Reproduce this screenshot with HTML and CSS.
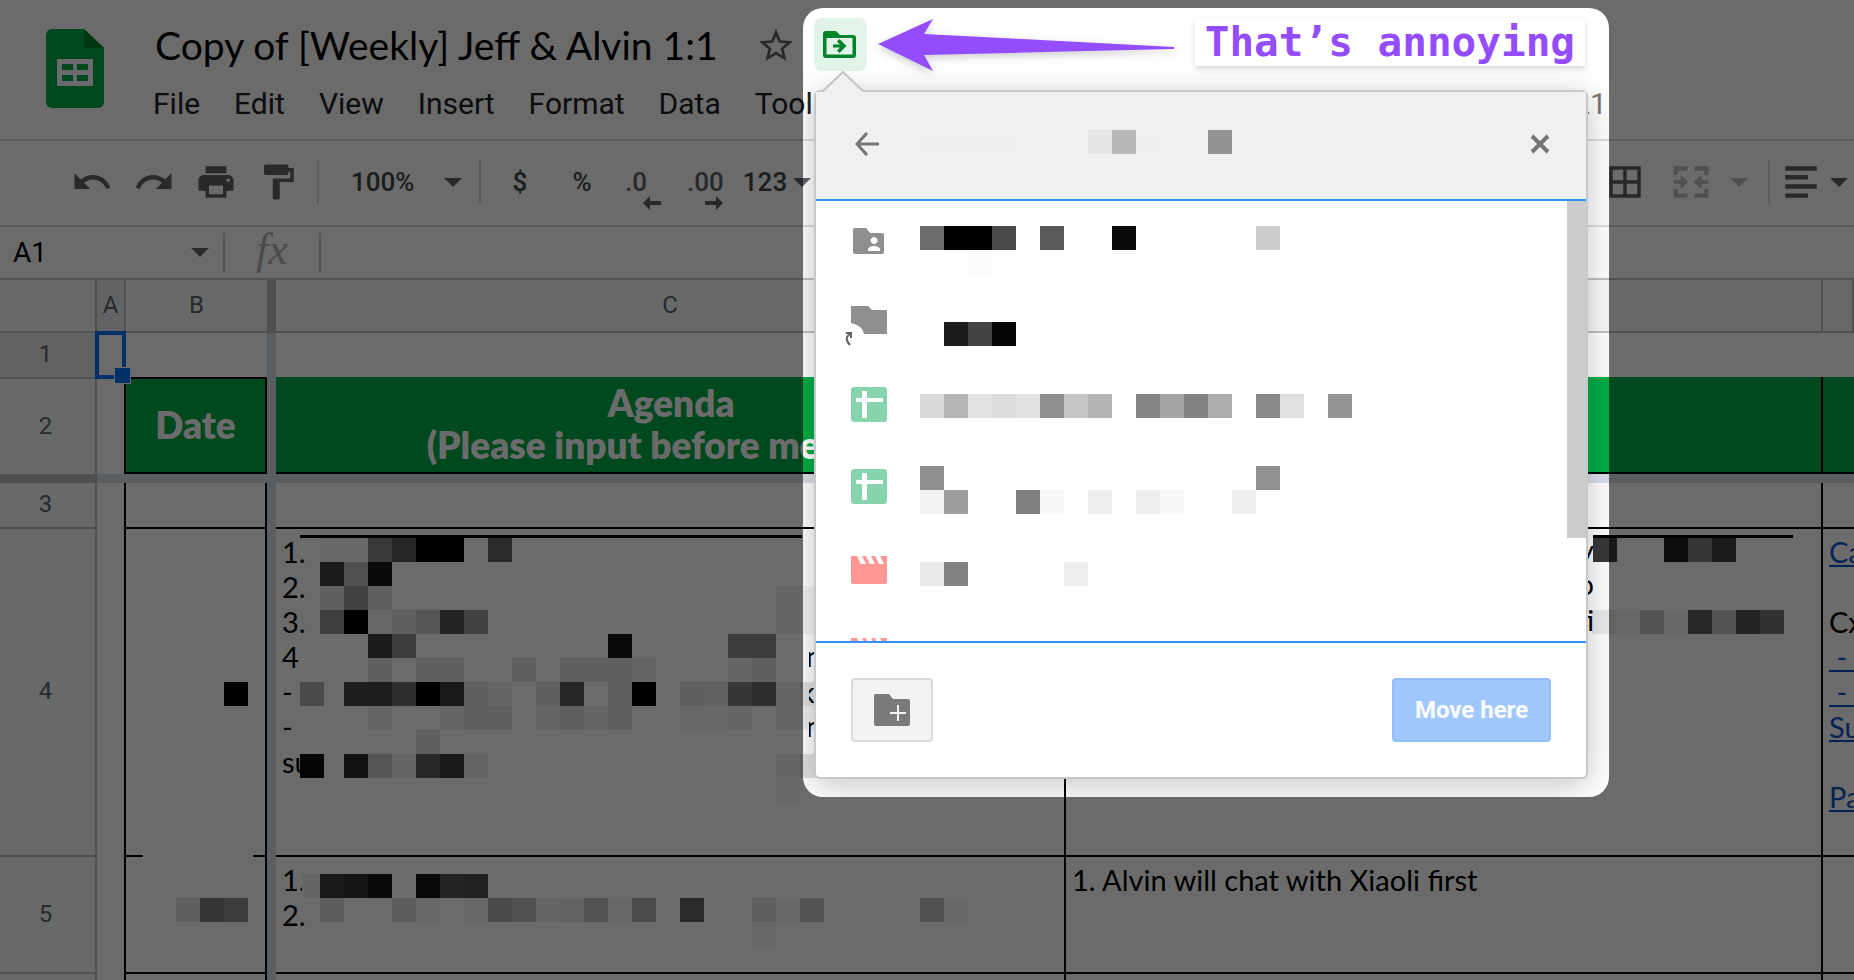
FILE: index.html
```html
<!DOCTYPE html>
<html lang="en">

<head>
    <meta charset="UTF-8">
    <meta name="viewport" content="width=device-width, initial-scale=1.0">
    <title>Copy of [Weekly] Jeff &amp; Alvin 1:1</title>
    <link rel="stylesheet" href="styles.css">
</head>

<body>
    <main class="app">
        <header class="header">
            <svg class="logo" viewBox="0 0 58 79">
                <path fill="#00ac47" d="M6 0h32l20 19v54a6 6 0 0 1-6 6H6a6 6 0 0 1-6-6V6a6 6 0 0 1 6-6z" />
                <path fill="#00832d" d="M38 0l20 19H38z" />
                <path fill="#fff" fill-rule="evenodd" d="M11 30h36v27H11zM16 35v6h11v-6zM31 35v6h11v-6zM16 46v6h11v-6zM31 46v6h11v-6z" />
            </svg>
            <div class="header__text">
                <div class="title">
                    <h1>Copy of [Weekly] Jeff &amp; Alvin 1:1</h1>
                    <button class="star" aria-label="Star">
                        <svg viewBox="2 2 20 19"><path fill="#5f6368" d="M22 9.24l-7.19-.62L12 2 9.19 8.63 2 9.24l5.46 4.73L5.82 21 12 17.27 18.18 21l-1.63-7.03L22 9.24zM12 15.4l-3.76 2.27 1-4.28-3.32-2.88 4.38-.38L12 6.1l1.71 4.04 4.38.38-3.32 2.88 1 4.28L12 15.4z" /></svg>
                    </button>
                </div>
                <nav class="menu">
                    <button>File</button>
                    <button>Edit</button>
                    <button>View</button>
                    <button>Insert</button>
                    <button>Format</button>
                    <button>Data</button>
                    <button>Tools</button>
                    <span class="edited">21</span>
                </nav>
            </div>
        </header>

        <section class="toolbar">
            <button class="tool" aria-label="Undo"><svg class="icon" viewBox="0 0 24 24"><path d="M12.5 8c-2.65 0-5.05.99-6.9 2.6L2 7v9h9l-3.62-3.62c1.39-1.16 3.16-1.88 5.12-1.88 3.54 0 6.55 2.31 7.6 5.5l2.37-.78C21.08 11.03 17.15 8 12.5 8z" /></svg></button>
            <button class="tool" aria-label="Redo"><svg class="icon" viewBox="0 0 24 24"><path d="M18.4 10.6C16.55 8.99 14.15 8 11.5 8c-4.65 0-8.58 3.03-9.96 7.22L3.9 16c1.05-3.19 4.05-5.5 7.6-5.5 1.95 0 3.73.72 5.12 1.88L13 16h9V7l-3.6 3.6z" /></svg></button>
            <button class="tool" aria-label="Print"><svg class="icon" viewBox="0 0 24 24"><path d="M19 8H5c-1.66 0-3 1.34-3 3v6h4v4h12v-4h4v-6c0-1.66-1.34-3-3-3zm-3 11H8v-5h8v5zm3-7c-.55 0-1-.45-1-1s.45-1 1-1 1 .45 1 1-.45 1-1 1zm-1-9H6v4h12V3z" /></svg></button>
            <button class="tool" aria-label="Paint format"><svg class="icon" viewBox="0 0 24 24"><path d="M18 4V3c0-.55-.45-1-1-1H5c-.55 0-1 .45-1 1v4c0 .55.45 1 1 1h12c.55 0 1-.45 1-1V6h1v4H9v11c0 .55.45 1 1 1h2c.55 0 1-.45 1-1v-9h8V4h-3z" /></svg></button>
            <span class="sep"></span>
            <label class="zoom">
                <select aria-label="Zoom">
                    <option>100%</option>
                </select>
                <svg class="caret" viewBox="0 0 18 9"><path d="M0 0h18L9 9z" /></svg>
            </label>
            <span class="sep"></span>
            <button class="tool">$</button>
            <button class="tool">%</button>
            <button class="tool tool--decimal">.0<svg class="shift" viewBox="0 0 18 14"><path d="M0 7l7-7v5h11v4H7v5z" /></svg></button>
            <button class="tool tool--decimal">.00<svg class="shift" viewBox="0 0 18 14"><path d="M18 7l-7-7v5H0v4h11v5z" /></svg></button>
            <button class="tool tool--number">123<svg class="caret" viewBox="0 0 18 9"><path d="M0 0h18L9 9z" /></svg></button>
            <div class="toolbar__right">
                <button class="tool" aria-label="Borders"><svg class="icon" viewBox="0 0 24 24"><path d="M3 3v18h18V3H3zm8 16H5v-6h6v6zm0-8H5V5h6v6zm8 8h-6v-6h6v6zm0-8h-6V5h6v6z" /></svg></button>
                <button class="tool tool--off" aria-label="Merge cells"><svg class="icon" viewBox="0 0 24 24"><path d="M2 3h8v2.500H4.500V8H2zM14 3h8v5h-2.500V5.500H14zM2 16h2.500v2.500H10V21H2zM19.500 16H22v5h-8v-2.500h5.500zM2 11h4V8l4.500 4L6 16v-3H2zM22 11h-4V8l-4.500 4 4.500 4v-3h4z" /></svg></button>
                <svg class="caret caret--off" viewBox="0 0 18 9"><path d="M0 0h18L9 9z" /></svg>
                <span class="sep"></span>
                <button class="tool tool--align" aria-label="Horizontal align"><svg class="icon" viewBox="0 0 24 24"><path d="M3 3h18v2.500H3zM3 8h13v2.500H3zM3 13.300h18v2.500H3zM3 18.500h13V21H3z" /></svg><svg class="caret" viewBox="0 0 18 9"><path d="M0 0h18L9 9z" /></svg></button>
            </div>
        </section>

        <section class="formula">
            <input class="formula__name" type="text" value="A1" aria-label="Name box">
            <svg class="caret" viewBox="0 0 18 9"><path d="M0 0h18L9 9z" /></svg>
            <span class="sep"></span>
            <label class="formula__fx" for="fx">fx</label>
            <span class="sep"></span>
            <input class="formula__input" type="text" id="fx">
        </section>

        <table class="sheet">
            <colgroup>
                <col class="col-num">
                <col class="col-a">
                <col class="col-b">
                <col class="col-freeze">
                <col class="col-c">
                <col class="col-d">
                <col>
            </colgroup>
            <thead>
                <tr class="row-head">
                    <th></th>
                    <th class="active">A</th>
                    <th class="no-line">B</th>
                    <th class="freeze-head"></th>
                    <th>C</th>
                    <th></th>
                    <th></th>
                </tr>
            </thead>
            <tbody>
                <tr class="row-1">
                    <th class="active">1</th>
                    <td class="selected"></td>
                    <td></td>
                    <td class="freeze"></td>
                    <td></td>
                    <td></td>
                    <td></td>
                </tr>
                <tr class="row-2">
                    <th>2</th>
                    <td class="line-r"></td>
                    <td class="green green--date line-r line-b">Date</td>
                    <td class="freeze"></td>
                    <td class="green line-b">Agenda<br>(Please input before meeting)</td>
                    <td class="green line-r line-b"></td>
                    <td class="green line-b"></td>
                </tr>
                <tr class="row-freeze">
                    <th></th>
                    <td colspan="6"></td>
                </tr>
                <tr class="row-3">
                    <th>3</th>
                    <td class="line-r"></td>
                    <td class="line-r line-b"></td>
                    <td class="freeze"></td>
                    <td class="line-r line-b"></td>
                    <td class="line-r line-b"></td>
                    <td class="line-b"></td>
                </tr>
                <tr class="row-4">
                    <th>4</th>
                    <td class="line-r"></td>
                    <td class="line-r line-gap">
                        <svg class="blocks" data-blocks="98,153,0"></svg>
                    </td>
                    <td class="freeze"></td>
                    <td class="line-r line-b">
                        <p>1.</p>
                        <p>2.</p>
                        <p>3.</p>
                        <p>4</p>
                        <p>-</p>
                        <p>-</p>
                        <p>su</p>
                        <svg class="blocks" data-scale="107" data-blocks="
                            44,9,104 68,9,104 92,9,58 116,9,38 140,9,0 164,9,0 212,9,42
                            44,33,26 68,33,80 92,33,10
                            44,57,95 68,57,65 92,57,95 500,57,102 524,57,102
                            44,81,62 68,81,0 92,81,104 116,81,95 140,81,85 164,81,35 188,81,65 500,81,102 524,81,102
                            92,105,26 116,105,60 332,105,8 452,105,60 476,105,60
                            92,129,95 140,129,95 164,129,95 236,129,95 284,129,95 308,129,95 332,129,95 356,129,100 452,129,102 476,129,95
                            24,153,74 68,153,30 92,153,30 116,153,45 140,153,0 164,153,24 188,153,95 212,153,102 260,153,95 284,153,38
                            332,153,95 356,153,0 404,153,95 428,153,97 452,153,55 476,153,46 500,153,102 524,153,94
                            92,177,102 164,177,102 188,177,95 212,177,95 260,177,102 284,177,95 308,177,102 332,177,95 404,177,104 428,177,104 452,177,100 500,177,100 524,177,100
                            140,201,95
                            24,225,5 68,225,18 92,225,85 116,225,102 140,225,40 164,225,24 188,225,100 500,225,102 524,225,94
                            500,249,104">
                            <path class="rule" d="M24 7H526" />
                            <svg x="533" width="20">
                                <text x="-3" y="138">n</text>
                                <text x="-9" y="174">k</text>
                                <text x="-3" y="208">n</text>
                            </svg>
                        </svg>
                    </td>
                    <td class="line-r line-b">
                        <svg class="blocks" data-scale="107" data-blocks="
                            527,9,24 598,9,14 622,9,55 646,9,26
                            526,81,98 550,81,103 574,81,83 598,81,104 622,81,40 646,81,83 670,81,36 694,81,50">
                            <path class="rule" d="M527 7H727" />
                            <svg width="527" text-anchor="end">
                                <text x="528" y="32">y</text>
                                <text x="528" y="66">o</text>
                                <text x="528" y="102">ti</text>
                            </svg>
                        </svg>
                    </td>
                    <td class="line-b">
                        <p><a href="#">Ca</a></p>
                        <p></p>
                        <p>Cx</p>
                        <p><a href="#"> -   </a></p>
                        <p><a href="#"> -   </a></p>
                        <p><a href="#">Su</a></p>
                        <p></p>
                        <p><a href="#">Pa</a></p>
                    </td>
                </tr>
                <tr class="row-5">
                    <th>5</th>
                    <td class="line-r"></td>
                    <td class="line-r line-b">
                        <svg class="blocks" data-scale="107" data-blocks="50,41,95 74,41,55 98,41,60"></svg>
                    </td>
                    <td class="freeze"></td>
                    <td class="line-r line-b">
                        <p>1.</p>
                        <p>2.</p>
                        <svg class="blocks" data-scale="107" data-blocks="
                            44,17,24 68,17,20 92,17,11 140,17,8 164,17,36 188,17,33 26,17,102
                            44,41,93 116,41,92 140,41,103 188,41,103 212,41,75 236,41,80 260,41,101 284,41,99 308,41,82 332,41,103
                            356,41,76 404,41,42 476,41,95 500,41,104 524,41,83 644,41,80 668,41,104
                            476,65,104"></svg>
                    </td>
                    <td class="line-r line-b">
                        <p>1. Alvin will chat with Xiaoli first</p>
                    </td>
                    <td class="line-b"></td>
                </tr>
                <tr class="row-6">
                    <th></th>
                    <td class="line-r"></td>
                    <td class="line-r"></td>
                    <td class="freeze"></td>
                    <td class="line-r"></td>
                    <td class="line-r"></td>
                    <td></td>
                </tr>
            </tbody>
        </table>
    </main>

    <!-- everything outside of the spotlight is dimmed -->
    <div class="spotlight">
        <div class="callout">
            <button class="move" aria-label="Move">
                <svg viewBox="0 0 33 27"><path fill="#00832d" fill-rule="evenodd" d="M3 0h10l4 4h13a3 3 0 0 1 3 3v17a3 3 0 0 1-3 3H3a3 3 0 0 1-3-3V3a3 3 0 0 1 3-3zM3.500 7v16.500h26V7zM10 13.500h7l-3-3 2.500-2.500 7 7-7 7-2.500-2.500 3-3h-7z" /></svg>
            </button>
            <svg class="arrow" viewBox="0 0 297 53"><path fill="#934dff" d="M0 26L55 1 46 16 296 29v2L46 37l9 16z" /></svg>
            <p class="note">That’s annoying</p>
        </div>
        <section class="dialog">
            <svg class="dialog__tip" viewBox="0 0 44 22"><path fill="#f0f0f0" d="M1 22L22 1l21 21z" /><path fill="none" stroke="#c4c4c4" stroke-width="2" d="M1 21L22 1l21 20" /></svg>
            <header class="dialog__header">
                <button aria-label="Back"><svg class="back" viewBox="0 0 24 24"><path d="M24 12H2M12 1L2 12l10 11" /></svg></button>
                <svg class="blocks" data-blocks="104,38,239 128,38,239 152,38,239 176,38,239 272,38,230 296,38,184 320,38,239 392,38,147"></svg>
                <button aria-label="Close"><svg class="close" viewBox="0 0 20 20"><path d="M2 2l16 16M18 2L2 18" /></svg></button>
            </header>
            <ul class="list">
                <li>
                    <svg class="list__icon" viewBox="0 0 36 36"><path fill="#8f8f8f" fill-rule="evenodd" d="M4 5h11l4 5h12a2 2 0 0 1 2 2v17a2 2 0 0 1-2 2H4a2 2 0 0 1-2-2V7a2 2 0 0 1 2-2zM23 14a3.500 3.500 0 1 0 .1 0zM17 28h12v-2q-1-3-6-3t-6 3z" /></svg>
                    <svg class="blocks" data-blocks="104,25,107 128,25,0 152,25,0 176,25,74 224,25,90 296,25,10 440,25,204 152,49,252 320,49,253"></svg>
                </li>
                <li>
                    <svg class="list__icon" viewBox="0 0 36 36"><path fill="#8f8f8f" d="M0 1h17l4 4h15v24H13Q11 20 0 18z" /><path fill="none" stroke="#5f6368" stroke-width="2" d="M-5 28h5v5M0 28q-8 5-1 12" /></svg>
                    <svg class="blocks" data-blocks="128,39,28 152,39,67 176,39,5"></svg>
                </li>
                <li>
                    <svg class="list__icon" viewBox="0 0 36 36"><rect width="36" height="35" rx="3" fill="#87d3ab" /><path fill="#fff" d="M5 11h6V4h5v7h16v4H16v16h-5V15H5z" /></svg>
                    <svg class="blocks" data-blocks="104,29,217 128,29,181 152,29,226 176,29,221 200,29,225 224,29,144 248,29,197 272,29,180 320,29,132 344,29,165 368,29,130 392,29,172 440,29,136 464,29,224 512,29,148"></svg>
                </li>
                <li>
                    <svg class="list__icon" viewBox="0 0 36 36"><rect width="36" height="35" rx="3" fill="#87d3ab" /><path fill="#fff" d="M5 11h6V4h5v7h16v4H16v16h-5V15H5z" /></svg>
                    <svg class="blocks" data-blocks="104,19,144 440,19,145 104,43,243 128,43,158 176,43,254 200,43,128 224,43,248 272,43,237 320,43,237 344,43,248 416,43,239"></svg>
                </li>
                <li>
                    <svg class="list__icon" viewBox="0 0 36 36"><path fill="#ff9894" d="M0 5h6l4 8h5l-4-8h4l4 8h5l-4-8h4l4 8h5l-4-8h7v26a2 2 0 0 1-2 2H2a2 2 0 0 1-2-2z" /></svg>
                    <svg class="blocks" data-blocks="104,33,233 128,33,130 176,33,253 200,33,253 248,33,237"></svg>
                </li>
                <li>
                    <svg class="list__icon" viewBox="0 0 36 36"><path fill="#ff9894" d="M0 5h6l4 8h5l-4-8h4l4 8h5l-4-8h4l4 8h5l-4-8h7v26a2 2 0 0 1-2 2H2a2 2 0 0 1-2-2z" /></svg>
                </li>
            </ul>
            <footer class="dialog__footer">
                <button class="folder" aria-label="New folder">
                    <svg viewBox="0 0 36 32"><path fill="#7a7a7a" d="M1 0h14l4 5h15a2 2 0 0 1 2 2v23a2 2 0 0 1-2 2H2a2 2 0 0 1-2-2V1z" /><path stroke="#f4f4f4" stroke-width="2" d="M16 19h16M24 11v16" /></svg>
                </button>
                <button class="submit">Move here</button>
            </footer>
        </section>
    </div>

    <script>
        // data-blocks: "x,y,grey" for each 24px block, data-scale: the grey that counts as white
        document.querySelectorAll(".blocks").forEach((svg) => {
            let white = svg.dataset.scale || 255;
            svg.dataset.blocks.trim().split(/\s+/).forEach((block) => {
                let [x, y, grey] = block.split(",").map(Number);
                let rect = document.createElementNS("http://www.w3.org/2000/svg", "rect");
                rect.setAttribute("x", x);
                rect.setAttribute("y", y);
                rect.setAttribute("width", 24);
                rect.setAttribute("height", 24);
                let level = Math.round(grey / white * 255);
                rect.setAttribute("fill", `rgb(${level}, ${level}, ${level})`);
                svg.prepend(rect);
            });
        });
    </script>
</body>

</html>
```

FILE: styles.css
```css
* {
    box-sizing: border-box;
}

body {
    position: relative;
    margin: 0;
    min-height: 100vh;
    overflow: hidden;
    background-color: #fff;
    color: #000;
    font-family: Roboto, "Liberation Sans", sans-serif;
}

h1,
p,
ul {
    margin: 0;
    padding: 0;
}

button,
input,
select {
    margin: 0;
    padding: 0;
    border: none;
    background: none;
    color: inherit;
    font: inherit;
}

svg {
    display: block;
    flex: none;
}

.app {
    height: 100vh;
    overflow: hidden;
}

/* header */
.header {
    display: flex;
    height: 141px;
    padding: 16px 0 0 46px;
    border-bottom: 2px solid #dadce0;
}

.logo {
    width: 58px;
    height: 79px;
    margin-top: 13px;
}

.header__text {
    flex: 1;
    margin-left: 49px;
}

.title {
    display: flex;
    align-items: center;
    height: 58px;
    padding-left: 2px;
    gap: 41px;
}

.title h1 {
    font-family: Lato, sans-serif;
    font-size: 39px;
    font-weight: 400;
    white-space: nowrap;
}

.star svg {
    width: 34px;
    height: 32px;
}

.menu {
    display: flex;
    align-items: center;
    height: 58px;
    gap: 34px;
    color: #202124;
    font-size: 30px;
}

.edited {
    margin-left: 711px;
    color: #777;
}

/* toolbar */
.toolbar {
    display: flex;
    align-items: center;
    height: 86px;
    padding: 0 0 2px 61px;
    border-bottom: 2px solid #dadce0;
    color: #444746;
    fill: #5f6368;
    font-size: 26px;
    font-weight: 500;
}

.tool {
    display: flex;
    justify-content: center;
    align-items: center;
    width: 62px;
    height: 48px;
}

.tool--decimal {
    position: relative;
    justify-content: flex-start;
    padding-left: 12px;
    color: #5f6368;
}

.shift {
    position: absolute;
    right: 14px;
    bottom: -4px;
    width: 18px;
    height: 14px;
}

.tool--number {
    width: 80px;
    gap: 6px;
}

.tool--off,
.caret--off {
    fill: #bdbfc1;
}

.tool--align {
    width: 80px;
    gap: 8px;
}

.icon {
    width: 42px;
    height: 42px;
}

.caret {
    width: 18px;
    height: 9px;
}

.sep {
    width: 2px;
    height: 44px;
    margin: 0 8px;
    background-color: #dadce0;
}

.zoom {
    display: flex;
    align-items: center;
    width: 144px;
    padding-left: 24px;
}

.zoom select {
    width: 93px;
    appearance: none;
}

.toolbar__right {
    display: flex;
    align-items: center;
    gap: 4px;
    margin-left: auto;
    color: #444746;
}

.toolbar__right .caret--off {
    margin-left: 4px;
}

.toolbar__right .sep {
    margin: 0 0 0 16px;
}

/* formula bar */
.formula {
    display: flex;
    align-items: center;
    height: 53px;
    border-bottom: 2px solid #c0c0c0;
    fill: #5f6368;
}

.formula__name {
    width: 191px;
    padding-left: 13px;
    font-size: 28px;
}

.formula .sep {
    height: 40px;
    margin: 0;
    background-color: #c6c6c6;
}

.formula .caret + .sep {
    margin-left: 14px;
}

.formula__fx {
    width: 94px;
    color: #b0b3b5;
    font-family: "Liberation Serif", serif;
    font-size: 44px;
    font-style: italic;
    line-height: 40px;
    padding-bottom: 6px;
    text-align: center;
}

.formula__input {
    flex: 1;
}

/* sheet */
.sheet {
    width: 100%;
    border-spacing: 0;
    table-layout: fixed;
}

.col-num {
    width: 97px;
}

.col-a {
    width: 29px;
}

.col-b {
    width: 141px;
}

.col-freeze {
    width: 9px;
}

.col-c {
    width: 790px;
}

.col-d {
    width: 757px;
}

.sheet th {
    padding: 0 0 2px;
    border-right: 2px solid #c0c0c0;
    border-bottom: 2px solid #c0c0c0;
    background-color: #f8f9fa;
    color: #5f6368;
    font-size: 24px;
    font-weight: 400;
}

.sheet tbody th {
    padding-right: 4px;
}

.sheet th.active {
    background-color: #e8eaed;
}

.sheet th.no-line {
    border-right: none;
}

.sheet th.freeze-head {
    border: none;
    background-color: #bcbcbc;
}

.sheet td {
    position: relative;
    padding: 0;
    background-color: #fff;
    font-family: Lato, sans-serif;
    font-size: 29px;
    line-height: 35px;
    vertical-align: top;
    overflow: hidden;
}

.sheet td p {
    height: 35px;
    padding-left: 6px;
    white-space: pre;
}

.sheet td p:first-child {
    margin-top: 5px;
}

.sheet a {
    color: #1155cc;
}

.sheet td.line-r {
    border-right: 2px solid #000;
}

.sheet td.line-b {
    border-bottom: 2px solid #000;
}

.sheet td.line-gap {
    background-image: linear-gradient(#000, #000), linear-gradient(#000, #000);
    background-position: left bottom, right bottom;
    background-repeat: no-repeat;
    background-size: 17px 2px, 12px 2px;
}

.sheet td.freeze {
    background-color: #dadfe8;
}

.sheet td.selected {
    overflow: visible;
    z-index: 1;
}

.selected::before {
    content: "";
    position: absolute;
    inset: -2px 0 -2px -2px;
    border: 4px solid #0072f0;
}

.selected::after {
    content: "";
    position: absolute;
    right: -5px;
    bottom: -7px;
    width: 15px;
    height: 15px;
    border: 1px solid #fff;
    background-color: #0072f0;
}

.sheet td.green {
    padding-bottom: 2px;
    background-color: #00ac47;
    color: #fff;
    font-size: 37px;
    font-weight: 800;
    line-height: 42px;
    text-align: center;
    vertical-align: middle;
}

.sheet td.green--date {
    border-top: 2px solid #000;
}

.row-head {
    height: 53px;
}

.row-1 {
    height: 44px;
}

.row-2 {
    height: 97px;
}

.row-3 {
    height: 46px;
}

.row-4 {
    height: 328px;
}

.row-5 {
    height: 117px;
}

.row-6 {
    height: 40px;
}

.row-freeze {
    height: 9px;
}

.row-1 th,
.sheet .row-2 th {
    border-bottom: none;
}

.sheet .row-2 th {
    border-top: 2px solid #c0c0c0;
}

.sheet .row-freeze th {
    border: none;
    background-color: #bcbcbc;
}

.sheet .row-freeze td {
    background-color: #dadfe8;
}

.blocks {
    position: absolute;
    top: 0;
    left: 0;
    width: 100%;
    height: 100%;
    shape-rendering: crispEdges;
}

.rule {
    stroke: #000;
    stroke-width: 3px;
}

/* spotlight */
.spotlight {
    position: absolute;
    top: 8px;
    left: 803px;
    z-index: 2;
    width: 806px;
    padding: 10px 21px 18px 11px;
    border-radius: 20px;
    box-shadow: 0 0 0 3000px rgba(0, 0, 0, 0.58);
    overflow: hidden;
}

.callout {
    display: flex;
    align-items: center;
    height: 53px;
    padding-right: 3px;
}

.move {
    display: flex;
    justify-content: center;
    align-items: center;
    width: 53px;
    height: 53px;
    padding-right: 2px;
    border-radius: 8px;
    background-color: #e2f3e8;
}

.move svg {
    width: 33px;
    height: 27px;
}

.arrow {
    width: 297px;
    height: 53px;
    margin-left: 11px;
    filter: drop-shadow(0 3px 4px rgba(0, 0, 0, 0.2));
}

.note {
    height: 48px;
    margin-bottom: 5px;
    margin-left: auto;
    padding: 0 10px;
    background-color: #fff;
    box-shadow: 0 3px 6px rgba(0, 0, 0, 0.15);
    color: #934dff;
    font-family: "DejaVu Sans Mono", monospace;
    font-size: 41px;
    font-weight: 700;
    line-height: 48px;
}

.dialog {
    position: relative;
    margin-top: 19px;
    border: 2px solid #c8c8c8;
    border-radius: 6px;
    background-color: #fff;
    box-shadow: 0 6px 32px rgba(0, 0, 0, 0.24);
}

.dialog__tip {
    position: absolute;
    top: -21px;
    left: 5px;
    width: 44px;
    height: 22px;
}

.dialog__header {
    position: relative;
    display: flex;
    justify-content: space-between;
    align-items: center;
    height: 109px;
    padding: 0 36px 4px 39px;
    border-bottom: 2px solid #3390ff;
    background-color: #f0f0f0;
}

.back,
.close {
    fill: none;
    stroke: #757575;
    stroke-width: 3px;
}

.back {
    width: 24px;
    height: 24px;
}

.close {
    width: 20px;
    height: 20px;
    stroke-width: 4px;
}

.list {
    height: 442px;
    border-bottom: 2px solid #3390ff;
    list-style: none;
    overflow: hidden;
    background: linear-gradient(#ccc, #ccc) no-repeat right top / 19px 337px;
}

.list li {
    position: relative;
    display: flex;
    align-items: center;
    height: 82px;
    padding: 0 0 2px 35px;
}

.list__icon {
    width: 36px;
    height: 36px;
    overflow: visible;
}

.dialog__footer {
    display: flex;
    justify-content: space-between;
    align-items: center;
    height: 134px;
    padding: 0 35px;
}

.folder,
.submit {
    display: flex;
    justify-content: center;
    align-items: center;
    height: 64px;
    border-radius: 4px;
}

.folder {
    width: 82px;
    border: 2px solid #dadada;
    background-color: #f3f3f3;
}

.folder svg {
    width: 36px;
    height: 32px;
}

.submit {
    width: 159px;
    border: 2px solid #94bfff;
    background-color: #a0c8ff;
    color: #fff;
    font-size: 24px;
    font-weight: 700;
}
```
